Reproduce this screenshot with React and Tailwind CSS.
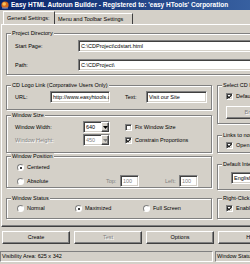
import React from "react";

const sunken =
  "border border-t-[#808080] border-l-[#808080] border-r-white border-b-white shadow-[inset_1px_1px_0_#404040,inset_-1px_-1px_0_#d4d0c8]";
const raised =
  "border border-t-white border-l-white border-r-[#404040] border-b-[#404040] shadow-[inset_-1px_-1px_0_#808080]";

const Group = ({ label, className, children }) => (
  <div
    className={`relative border border-[#808080] shadow-[inset_1px_1px_0_#fff,1px_1px_0_#fff] ${className}`}
  >
    <span className="absolute -top-[4px] left-[4px] bg-[#d4d0c8] px-[1px] leading-[7px] whitespace-nowrap">
      {label}
    </span>
    {children}
  </div>
);

const Field = ({ value, className, disabled }) => (
  <div
    className={`h-[12px] bg-white ${sunken} px-[2px] leading-[10px] overflow-hidden whitespace-nowrap ${
      disabled ? "text-[#808080]" : ""
    } ${className}`}
  >
    {value}
  </div>
);

const Combo = ({ value, disabled, className }) => (
  <div className={`h-[12px] bg-white ${sunken} flex ${className}`}>
    <span
      className={`flex-1 pl-[2px] leading-[10px] ${disabled ? "text-[#808080]" : ""}`}
    >
      {value}
    </span>
    <span className={`w-[8px] h-[10px] bg-[#d4d0c8] ${raised} flex items-center justify-center`}>
      <svg width="5" height="3" viewBox="0 0 5 3">
        <path d="M0 0h5L2.5 3z" fill={disabled ? "#808080" : "#000"} />
      </svg>
    </span>
  </div>
);

const Check = ({ label, checked, className }) => (
  <div className={`flex items-center gap-[3px] h-[7px] ${className}`}>
    <span className={`w-[7px] h-[7px] bg-white ${sunken} flex items-center justify-center`}>
      {checked && (
        <svg width="5" height="5" viewBox="0 0 5 5">
          <path d="M0.5 2.2L2 3.8L4.6 0.8" stroke="#000" strokeWidth="1.1" fill="none" />
        </svg>
      )}
    </span>
    <span className="leading-[7px] whitespace-nowrap">{label}</span>
  </div>
);

const Radio = ({ label, checked, className }) => (
  <div className={`flex items-center gap-[3px] h-[7px] ${className}`}>
    <span className="w-[7px] h-[7px] rounded-full bg-white border border-t-[#808080] border-l-[#808080] border-r-white border-b-white flex items-center justify-center">
      {checked && <span className="w-[2px] h-[2px] rounded-full bg-black" />}
    </span>
    <span className="leading-[7px] whitespace-nowrap">{label}</span>
  </div>
);

const Button = ({ children, disabled }) => (
  <div
    className={`w-[68px] h-[13px] bg-[#d4d0c8] ${raised} flex items-center justify-center leading-[7px] ${
      disabled ? "text-[#808080] [text-shadow:1px_1px_0_#fff]" : ""
    }`}
  >
    {children}
  </div>
);

export default function App() {
  return (
    <div className="w-[250px] h-[264px] overflow-hidden bg-[#d4d0c8] text-black text-[5.5px] font-['Liberation_Sans',Arial,sans-serif]">
      <div className="w-[340px]">
        {/* Title bar */}
        <div className="h-[10px] flex items-center gap-[2px] pl-[1px] bg-linear-to-r from-[#0a246a] to-[#4a76b4]">
          <svg width="8" height="8" viewBox="0 0 8 8">
            <circle cx="4" cy="4" r="3.6" fill="#d86a1c" />
            <circle cx="3.2" cy="3" r="1.8" fill="#f6c05a" />
            <path d="M1 6.5h6v1H1z" fill="#6b8fd6" />
          </svg>
          <span className="text-white font-bold text-[6.5px] leading-[8px] whitespace-nowrap">
            Easy HTML Autorun Builder - Registered to: 'easy HTools' Corporation
          </span>
        </div>

        {/* Tabs */}
        <div className="h-[14px] flex items-end pl-[3px]">
          <div className="h-[13px] w-[52px] border-t border-l border-white border-r border-r-[#404040] flex items-center pl-[3px] leading-[7px] whitespace-nowrap">
            General Settings:
          </div>
          <div className="h-[11px] w-[78px] border-t border-white border-r border-r-[#404040] flex items-center pl-[3px] leading-[7px] whitespace-nowrap">
            Menu and Toolbar Settings
          </div>
        </div>

        {/* Tab panel */}
        <div className="h-[203px] ml-[1px] border-t border-l border-white border-b border-b-[#404040] shadow-[inset_0_-1px_0_#808080] pl-[4px]">
          <Group label="Project Directory" className="mt-[8px] h-[42px] w-[330px]">
            <div className="flex items-center mt-[6px] pl-[8px]">
              <span className="w-[63px]">Start Page:</span>
              <Field value="C:\CDProject\cdstart.html" className="w-[240px]" />
            </div>
            <div className="flex items-center mt-[7px] pl-[8px]">
              <span className="w-[63px]">Path:</span>
              <Field value="C:\CDProject\" className="w-[240px]" />
            </div>
          </Group>

          <div className="flex mt-[10px]">
            {/* Left column */}
            <div className="w-[206px] flex flex-col">
              <Group label="CD Logo Link (Corporative Users Only)" className="h-[25px]">
                <div className="flex items-center mt-[5px] pl-[8px]">
                  <span className="w-[35px]">URL:</span>
                  <Field value="http://www.easyhtools.com" className="w-[60px]" />
                  <span className="w-[21px] ml-[15px]">Text:</span>
                  <Field value="Visit our Site" className="w-[61px]" />
                </div>
              </Group>

              <Group label="Window Size" className="mt-[5px] h-[38px]">
                <div className="flex items-center mt-[5px] pl-[8px]">
                  <span className="w-[68px]">Window Width:</span>
                  <Combo value="640" className="w-[27px]" />
                  <Check label="Fix Window Size" className="ml-[15px]" />
                </div>
                <div className="flex items-center mt-[1px] pl-[8px]">
                  <span className="w-[68px] text-[#808080] [text-shadow:1px_1px_0_#fff]">
                    Window Height:
                  </span>
                  <Combo value="450" disabled className="w-[27px]" />
                  <Check label="Constrain Proportions" checked className="ml-[15px]" />
                </div>
              </Group>

              <Group label="Window Position" className="mt-[3px] h-[32px]">
                <Radio label="Centered" checked className="mt-[7px] ml-[10px]" />
                <div className="flex items-center mt-[4px] pl-[10px] h-[12px]">
                  <Radio label="Absolute" className="w-[89px]" />
                  <span className="w-[14px] text-[#808080]">Top:</span>
                  <Field value="100" disabled className="w-[19px]" />
                  <span className="w-[14px] ml-[26px] text-[#808080]">Left:</span>
                  <Field value="100" disabled className="w-[19px]" />
                </div>
              </Group>

              <Group label="Window Status" className="mt-[10px] h-[21px]">
                <div className="flex items-center mt-[6px] pl-[10px]">
                  <Radio label="Normal" className="w-[58px]" />
                  <Radio label="Maximized" checked className="w-[68px]" />
                  <Radio label="Full Screen" />
                </div>
              </Group>
            </div>

            {/* Right column */}
            <div className="ml-[5px] w-[110px] flex flex-col">
              <Group label="Select CD Icon" className="h-[39px]">
                <Check label="Default Icon" checked className="mt-[7px] ml-[8px]" />
                <div className={`mt-[6px] ml-[8px] w-[60px] h-[13px] ${raised} flex items-center justify-center text-[#808080] [text-shadow:1px_1px_0_#fff]`}>
                  Browse...
                </div>
              </Group>

              <Group label="Links to non-HTML files" className="mt-[11px] h-[18px]">
                <Check label="Open in browser" checked className="mt-[6px] ml-[8px]" />
              </Group>

              <Group label="Default Interface Language" className="mt-[11px] h-[26px]">
                <Combo value="English" className="mt-[7px] ml-[13px] w-[70px]" />
              </Group>

              <Group label="Right-Click Menu" className="mt-[8px] h-[21px]">
                <Check label="Enable" checked className="mt-[6px] ml-[8px]" />
              </Group>
            </div>
          </div>
        </div>

        {/* Buttons */}
        <div className="flex gap-[4px] pl-[2px] mt-[4px]">
          <Button>Create</Button>
          <Button disabled>Test</Button>
          <Button>Options</Button>
          <Button>Help</Button>
        </div>

        {/* Status bar */}
        <div className="flex mt-[7px] h-[11px]">
          <div className="w-[213px] border border-t-[#808080] border-l-[#808080] border-r-white border-b-white pl-[1px] leading-[9px] whitespace-nowrap">
            Visibility Area: 625 x 342
          </div>
          <div className="ml-[2px] w-[100px] border border-t-[#808080] border-l-[#808080] border-r-white border-b-white pl-[1px] leading-[9px] whitespace-nowrap">
            Window Status: Maximized
          </div>
        </div>
      </div>
    </div>
  );
}
